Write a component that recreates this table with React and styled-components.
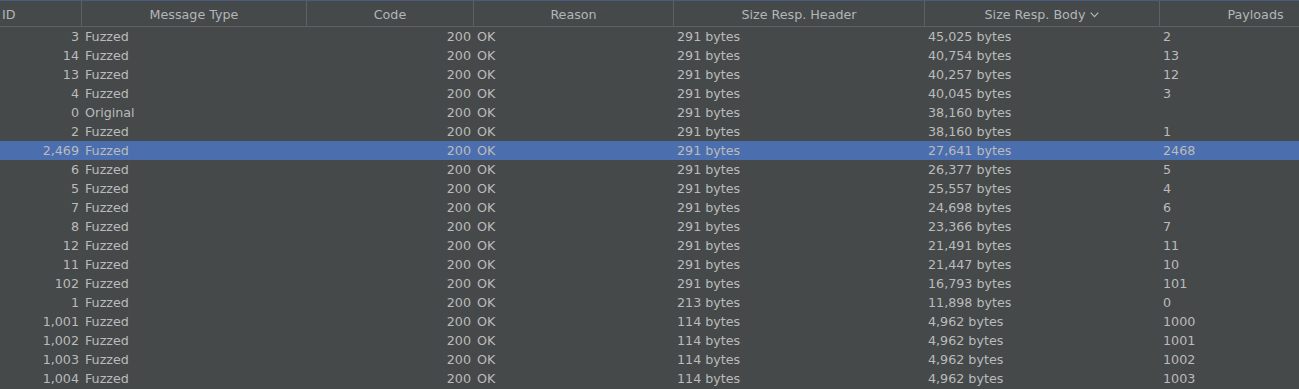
import React from 'react';
import styled, { createGlobalStyle } from 'styled-components';

const GlobalStyle = createGlobalStyle`
  html, body {
    margin: 0;
    padding: 0;
    background: #45494a;
    overflow: hidden;
  }
`;

const COLS = '81px 225px 167px 200px 251px 235px 192px';

const Table = styled.div`
  width: 1351px;
  height: 389px;
  background: #45494a;
  border-top: 1px solid #4a5d80;
  font-family: "DejaVu Sans", sans-serif;
  font-size: 12.7px;
  color: #bbbbbb;
`;

const HeaderRow = styled.div`
  display: grid;
  grid-template-columns: ${COLS};
  height: 25px;
  border-bottom: 1px solid #5e6163;
`;

const HeaderCell = styled.div`
  display: flex;
  align-items: center;
  justify-content: ${p => (p.$left ? 'flex-start' : 'center')};
  gap: 5px;
  padding-top: 2px;
  padding-left: ${p => (p.$left ? '2px' : '0')};
  border-left: ${p => (p.$first ? 'none' : '1px solid #5e6163')};
  color: #b3b6b8;
  white-space: nowrap;
`;

const Row = styled.div`
  display: grid;
  grid-template-columns: ${COLS};
  height: 19px;
  align-items: center;
  background: ${p => (p.$selected ? '#4b6eaf' : 'transparent')};
`;

const Cell = styled.div`
  text-align: ${p => (p.$right ? 'right' : 'left')};
  padding: ${p => (p.$right ? '0 2px 0 0' : '0 0 0 4px')};
  white-space: nowrap;
  overflow: hidden;
`;

const SortChevron = () => (
  <svg width="9" height="6" viewBox="0 0 9 6" fill="none">
    <path d="M0.7 0.7 L4.5 4.7 L8.3 0.7" stroke="#b3b6b8" strokeWidth="1.2" />
  </svg>
);

const rows = [
  ['3', 'Fuzzed', '291', '45,025', '2'],
  ['14', 'Fuzzed', '291', '40,754', '13'],
  ['13', 'Fuzzed', '291', '40,257', '12'],
  ['4', 'Fuzzed', '291', '40,045', '3'],
  ['0', 'Original', '291', '38,160', ''],
  ['2', 'Fuzzed', '291', '38,160', '1'],
  ['2,469', 'Fuzzed', '291', '27,641', '2468'],
  ['6', 'Fuzzed', '291', '26,377', '5'],
  ['5', 'Fuzzed', '291', '25,557', '4'],
  ['7', 'Fuzzed', '291', '24,698', '6'],
  ['8', 'Fuzzed', '291', '23,366', '7'],
  ['12', 'Fuzzed', '291', '21,491', '11'],
  ['11', 'Fuzzed', '291', '21,447', '10'],
  ['102', 'Fuzzed', '291', '16,793', '101'],
  ['1', 'Fuzzed', '213', '11,898', '0'],
  ['1,001', 'Fuzzed', '114', '4,962', '1000'],
  ['1,002', 'Fuzzed', '114', '4,962', '1001'],
  ['1,003', 'Fuzzed', '114', '4,962', '1002'],
  ['1,004', 'Fuzzed', '114', '4,962', '1003'],
];

export default function App() {
  return (
    <>
      <GlobalStyle />
      <Table>
        <HeaderRow>
          <HeaderCell $first $left>ID</HeaderCell>
          <HeaderCell>Message Type</HeaderCell>
          <HeaderCell>Code</HeaderCell>
          <HeaderCell>Reason</HeaderCell>
          <HeaderCell>Size Resp. Header</HeaderCell>
          <HeaderCell>
            Size Resp. Body
            <SortChevron />
          </HeaderCell>
          <HeaderCell>Payloads</HeaderCell>
        </HeaderRow>
        {rows.map(([id, type, head, body, payload]) => (
          <Row key={id} $selected={id === '2,469'}>
            <Cell $right>{id}</Cell>
            <Cell>{type}</Cell>
            <Cell $right>200</Cell>
            <Cell>OK</Cell>
            <Cell>{head} bytes</Cell>
            <Cell>{body} bytes</Cell>
            <Cell>{payload}</Cell>
          </Row>
        ))}
      </Table>
    </>
  );
}
